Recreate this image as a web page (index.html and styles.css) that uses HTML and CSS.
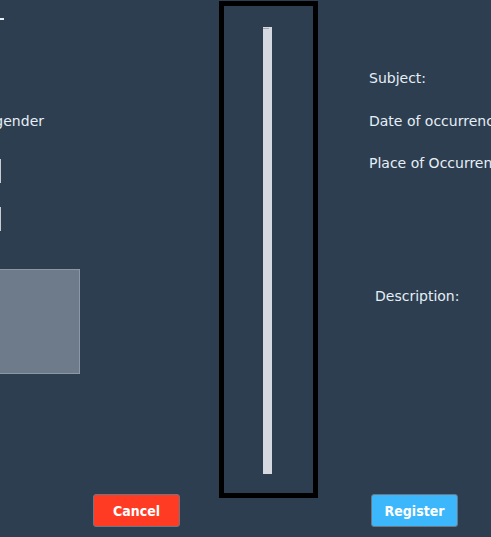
FILE: index.html
```html
<!DOCTYPE html>
<html lang="en">
<head>
<meta charset="utf-8">
<title>Register occurrence</title>
<link rel="stylesheet" href="styles.css">
</head>
<body>
<div class="layout">
  <section class="col-left">
    <div class="dash"></div>
    <div class="gender-row"><span class="label">Transgender</span></div>
    <div class="field"></div>
    <div class="field field-second"></div>
    <div class="photo"></div>
    <button class="btn btn-cancel" type="button">Cancel</button>
  </section>
  <section class="frame">
    <div class="track"></div>
  </section>
  <section class="col-right">
    <p class="label row-subject">Subject:</p>
    <p class="label row-date">Date of occurrence:</p>
    <p class="label row-place">Place of Occurrence:</p>
    <p class="label row-desc">Description:</p>
    <button class="btn btn-register" type="button">Register</button>
  </section>
</div>
</body>
</html>
```
FILE: styles.css
```css
html, body {
  margin: 0;
  padding: 0;
}
body {
  width: 491px;
  height: 537px;
  overflow: hidden;
  background: #2d3e50;
  font-family: "DejaVu Sans", Verdana, sans-serif;
  font-size: 14px;
  line-height: 17px;
  color: #e6eef6;
}
.layout {
  display: flex;
  height: 537px;
}
.label {
  margin: 0;
  white-space: nowrap;
}
.col-left {
  width: 219px;
  flex: none;
  display: flex;
  flex-direction: column;
}
.dash {
  margin-top: 18px;
  width: 4px;
  height: 2px;
  background: #e6eef6;
}
.gender-row {
  margin-top: 93px;
  width: 44px;
  display: flex;
  justify-content: flex-end;
  height: 17px;
}
.field {
  margin-top: 29px;
  margin-left: -119px;
  width: 120px;
  height: 24px;
  box-sizing: border-box;
  border: 1px solid #c8ccd2;
  border-left: none;
  background: transparent;
}
.field-second {
  margin-top: 24px;
}
.photo {
  margin-top: 38px;
  margin-left: -40px;
  width: 120px;
  height: 105px;
  box-sizing: border-box;
  background: #6e7b8a;
  border: 1px solid #8d98a4;
}
.btn {
  width: 87px;
  height: 33px;
  box-sizing: border-box;
  border: 1px solid #6d7784;
  border-radius: 3px;
  font-family: "DejaVu Sans Condensed", "DejaVu Sans", sans-serif;
  font-weight: bold;
  font-size: 14px;
  color: #ffffff;
  padding: 0;
  margin-top: auto;
  margin-bottom: 10px;
}
.btn-cancel {
  margin-left: 93px;
  background: #ff3b24;
}
.btn-register {
  margin-left: 2px;
  background: #3cb7fc;
}
.frame {
  flex: none;
  width: 99px;
  height: 497px;
  margin-top: 1px;
  box-sizing: border-box;
  border: 5px solid #000000;
  padding: 21px 0 0 39px;
}
.track {
  width: 9px;
  height: 447px;
  background: linear-gradient(#a2a6ad, #a2a6ad) 0 1px / 6px 1px no-repeat, #d6d9e0;
}
.col-right {
  flex: 1;
  display: flex;
  flex-direction: column;
  padding-left: 51px;
  min-width: 0;
}
.row-subject {
  margin-top: 70px;
}
.row-date {
  margin-top: 26px;
}
.row-place {
  margin-top: 25px;
}
.row-desc {
  margin-top: 116px;
  padding-left: 6px;
}
```
